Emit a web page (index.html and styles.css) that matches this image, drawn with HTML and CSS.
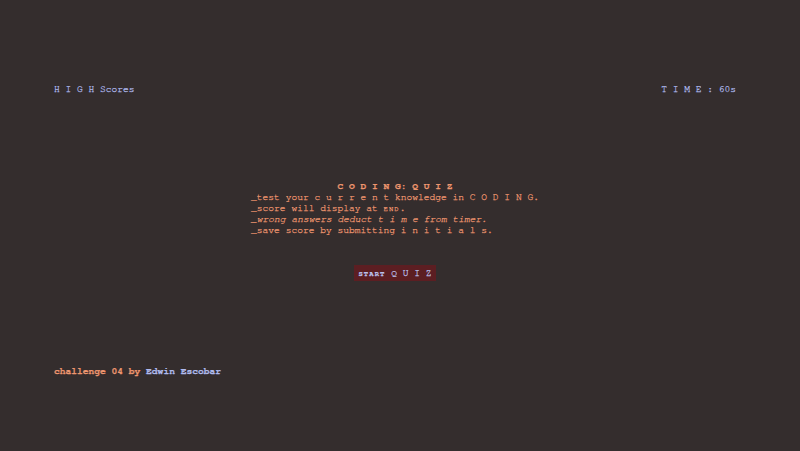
FILE: index.html
```html
<!DOCTYPE html>
<html>
<head>
<meta charset="utf-8">
<link rel="stylesheet" href="styles.css">
</head>
<body>
<div class="page">
  <header class="top">
    <div class="high">H I G H Scores</div>
    <div class="time">T I M E : 60s</div>
  </header>
  <main class="main">
    <div class="intro">
      <div class="title">C O D I N G: Q U I Z</div>
      <div class="line">_test your c u r r e n t knowledge in C O D I N G.</div>
      <div class="line">_score will display at <span class="sc">END</span>.</div>
      <div class="line"><em>_wrong answers deduct t i m e from timer.</em></div>
      <div class="line">_save score by submitting i n i t i a l s.</div>
    </div>
    <button class="start"><span class="sc">START</span> Q U I Z</button>
  </main>
  <footer class="foot">challenge 04 by <span class="name">Edwin Escobar</span></footer>
</div>
</body>
</html>
```
FILE: styles.css
```css
html, body {
  margin: 0;
  padding: 0;
  background: #342d2d;
}
.page {
  box-sizing: border-box;
  height: 451px;
  padding: 84px 64px 74px 54px;
  display: flex;
  flex-direction: column;
  font-family: "Nimbus Mono PS", "Nimbus Mono L", "FreeMono", "Courier 10 Pitch", "Courier New", "Liberation Mono", monospace;
  font-size: 9.6px;
  line-height: 11px;
  -webkit-text-stroke: 0.25px currentColor;
}
.top {
  display: flex;
  justify-content: space-between;
  color: #b0bbee;
}
.main {
  flex: 1;
  display: flex;
  flex-direction: column;
  align-items: center;
  padding-top: 86px;
}
.intro {
  color: #ee966f;
}
.title {
  text-align: center;
  font-weight: bold;
}
.sc {
  font-size: 7.2px;
  letter-spacing: 1.1px;
}
.start {
  margin-top: 29px;
  background: #5c1e22;
  border: none;
  border-radius: 0;
  color: #bcc4f0;
  font-family: inherit;
  font-size: 9.6px;
  line-height: 11px;
  padding: 3px 4px 2px;
  -webkit-text-stroke: 0.25px currentColor;
}
.start .sc {
  font-weight: bold;
}
.foot {
  color: #ee966f;
  font-weight: bold;
}
.name {
  color: #b0bbee;
}
```
